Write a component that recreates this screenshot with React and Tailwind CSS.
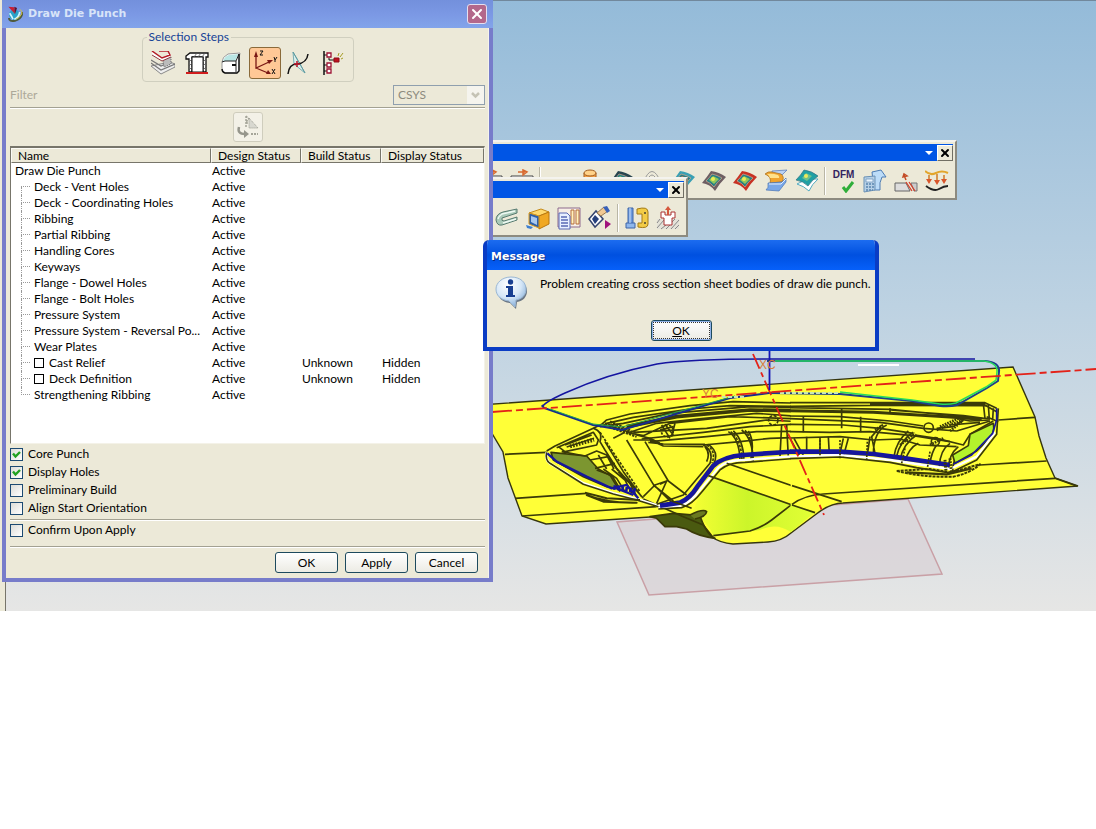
import React, { useState } from 'react';
import { X } from 'lucide-react';

// --- Data ---

const FEATURES = [
  { name: 'Deck - Vent Holes' },
  { name: 'Deck - Coordinating Holes' },
  { name: 'Ribbing' },
  { name: 'Partial Ribbing' },
  { name: 'Handling Cores' },
  { name: 'Keyways' },
  { name: 'Flange - Dowel Holes' },
  { name: 'Flange - Bolt Holes' },
  { name: 'Pressure System' },
  { name: 'Pressure System - Reversal Po...' },
  { name: 'Wear Plates' },
  { name: 'Cast Relief', optional: true, build: 'Unknown', display: 'Hidden' },
  { name: 'Deck Definition', optional: true, build: 'Unknown', display: 'Hidden' },
  { name: 'Strengthening Ribbing' },
];

// --- Icons ---

const Glyph = ({ children, className = 'h-6 w-6' }) => (
  <svg viewBox="0 0 24 24" className={`shrink-0 ${className}`} fill="none" aria-hidden="true">
    {children}
  </svg>
);

const AppLogo = () => (
  <Glyph className="h-4 w-4">
    <path d="M3 18q0 6 9 4 11-3 11-13" stroke="#4f5b3c" strokeWidth="3" />
    <circle cx="11" cy="13" r="8" fill="#2aa3c9" />
    <path d="M4 11q4 6 5 9M19 9q-1 8-8 11" stroke="#d8f5ff" strokeWidth="2.500" />
    <path d="M19 5q5 2 3 7-3 6-9 8" stroke="#cfc04a" strokeWidth="1.500" />
    <path d="M2 1l9 1 1 10z" fill="#c81f35" />
    <path d="M11 1l4 2-3 9z" fill="#5b1230" />
  </Glyph>
);

const SheetStackIcon = () => (
  <Glyph>
    <path d="M0 15l10 8 14-7v-3l-5-2z" fill="#eee" stroke="#888" />
    <path d="M0 12l10 7 14-6M0 9l10 6 9-4" stroke="#777" strokeWidth="1.200" />
    <path d="M12 9l8-4v8l-7 3z" fill="#bbb" stroke="#666" strokeDasharray="1 1" />
    <path d="M1 1l9 6 9-5 1 4-9 4L1 4z" fill="#fff" />
    <path d="M1 0l10 7 8-3-2-4H8" stroke="#b51c28" strokeWidth="1.500" />
    <path d="M1 4l10 6 9-4" stroke="#8d3a40" />
  </Glyph>
);

const ProfileIcon = () => (
  <Glyph>
    <path d="M1 5l4-3h18v4h-2v15h-3V6H7v15H4V8H1z" fill="#fff" stroke="#111" strokeWidth="1.300" />
    <path d="M7 6h11v15H7z" fill="#fff" stroke="#111" />
    <path d="M4 11l3-3M4 15l3-3M4 19l3-3M18 11l3-3M18 15l3-3M18 19l3-3M9 6l3-4M13 6l3-4M17 6l3-4" stroke="#555" strokeWidth="0.800" />
    <path d="M1 22h22" stroke="#d01c1c" strokeWidth="2" />
  </Glyph>
);

const BodyIcon = () => (
  <Glyph>
    <path d="M3 11q0-5 6-8l12-1q-1 4-1 9v9l-2 2H6q-3-2-3-5z" fill="#fff" stroke="#999" />
    <path d="M4 10q2-5 6-6l10-1-4 7z" fill="#b9e6e4" />
    <path d="M3 11l3-1h11l3-7M17 10v11" stroke="#222" />
    <path d="M3 18q0 3 3 4h12l2-2V3" stroke="#111" strokeWidth="1.400" />
    <path d="M13 14h4" stroke="#111" strokeWidth="2" />
  </Glyph>
);

const CsysIcon = () => (
  <svg viewBox="0 0 30 30" className="h-full w-full" fill="none" aria-hidden="true">
    <path d="M6 6v14l13-6M6 20l12 5" stroke="#7a1714" strokeWidth="1.300" />
    <path d="M6 3L4 9h4zM23 12l-6 0 2 4zM21 26l-3-4-2 4z" fill="#7a1714" />
    <path d="M10 3h3l-3 4h3M24 9l1 3 2-3M25 12v2M22 21l3 5M25 21l-3 5" stroke="#111" />
  </svg>
);

const DatumIcon = () => (
  <Glyph>
    <path d="M6 1l1 12 11 9z" fill="#d9efec" stroke="#7aaeb2" />
    <path d="M6 1l7 12 5 9" stroke="#5d9aa0" />
    <path d="M1 23q1-10 9-10 10-1 11-10" stroke="#111" strokeWidth="1.500" />
    <path d="M7 13h6M10 10v6" stroke="#b81428" strokeWidth="1.500" />
  </Glyph>
);

const TreeIcon = () => (
  <Glyph>
    <path d="M3 0v24" stroke="#111" strokeWidth="1.500" />
    <path d="M3 4h4M8 7v2h6M3 14h4M3 20h4" stroke="#111" />
    <path d="M6 2h4v4H6zM6 12h4v4H6zM6 18h4v4H6z" fill="#fff" stroke="#9d1233" strokeWidth="1.300" />
    <path d="M13 7h5v4h-5z" fill="#c1121f" stroke="#8d0c18" />
    <path d="M17 5l1-3M19 6l3-4M20 8l2-1" stroke="#a59b23" />
  </Glyph>
);

const ReorientIcon = () => (
  <Glyph>
    <path d="M3 12q-2 7 6 7" stroke="#96968c" strokeWidth="2.500" />
    <path d="M8 15l5 4-5 4z" fill="#96968c" />
    <path d="M10 1v12M10 1l3 3-3 3M10 8h4" stroke="#a5a599" strokeWidth="1.500" strokeDasharray="2 1" />
    <path d="M13 3l9 10H13z" fill="#d8d8d0" stroke="#9a9a90" strokeDasharray="1 1" />
    <path d="M15 19h7" stroke="#a5a599" strokeWidth="2" strokeDasharray="2 1" />
  </Glyph>
);

const InfoBubble = () => (
  <svg viewBox="0 0 32 34" className="h-[34px] w-8 shrink-0" aria-hidden="true">
    <defs>
      <radialGradient id="bubble" cx="40%" cy="25%" r="80%">
        <stop offset="0" stopColor="#fff" />
        <stop offset="0.550" stopColor="#d6e7f7" />
        <stop offset="1" stopColor="#7da8d6" />
      </radialGradient>
    </defs>
    <path d="M17 3c9 0 15 5 15 12 0 6-4 10-10 11l-1 7-6-6C6 26 3 21 3 15S8 3 17 3z" fill="#6a7684" />
    <path d="M16 1c9 0 15 5 15 12 0 6-4 10-10 11l-1 7-6-6C5 24 1 19 1 13S7 1 16 1z" fill="url(#bubble)" stroke="#9ab7d4" />
    <circle cx="15.500" cy="6" r="2.700" fill="#173e91" />
    <path d="M11 10h7v9h2v2h-9v-2h2v-7h-2z" fill="#173e91" />
  </svg>
);

const Patch = ({ edge, mid = '#8fc85a' }) => (
  <Glyph>
    <path d="M0 14Q5 8 9 2q8 1 15 6-7 7-11 14-5-7-13-8z" fill={edge} />
    <path d="M4 12q4-4 6-7 5 1 10 4-5 4-8 9-3-4-8-6z" fill="#257e86" stroke="#d9a98c" strokeWidth="0.700" />
    <path d="M7 11l4-4 6 3-5 5z" fill={mid} />
    <circle cx="11" cy="10" r="2" fill="#ecec55" />
  </Glyph>
);

const BlendIcon = () => (
  <Glyph>
    <path d="M8 2l15-1-5 5-10 0z" fill="#b9d1f3" stroke="#4d72b8" strokeWidth="0.700" />
    <path d="M1 5q3-3 7-2l9 2q4 3 1 8l-12 1q2-6-5-9z" fill="#f0a32e" stroke="#a46a18" strokeWidth="0.700" />
    <path d="M3 5q5-1 11 1 2 2 1 3l-9 0q-1-3-3-4z" fill="#ffe18b" />
    <path d="M4 14l14-1 4-4v4l-7 9-13-1q3-2 2-7z" fill="#79a7e8" stroke="#4974b5" strokeWidth="0.700" />
    <path d="M5 15h12l5-5" stroke="#e4effc" />
  </Glyph>
);

const OffsetIcon = () => (
  <Glyph>
    <path d="M2 15l10-5 11 0q-6 5-9 12-5-5-12-7z" fill="#fff" stroke="#54acc2" />
    <path d="M1 11Q6 6 9 1q8 1 14 6-6 4-10 10-5-5-12-6z" fill="#20a0a5" stroke="#35707e" strokeWidth="0.700" />
    <path d="M7 9l4-5 6 3-5 5z" fill="#6fc08a" />
    <circle cx="11" cy="7" r="2" fill="#ece95d" />
  </Glyph>
);

const DfmIcon = () => (
  <span className="flex h-6 w-6 flex-col items-center">
    <span className="font-['Liberation_Sans',sans-serif] text-[10px] leading-3 font-bold text-[#33235f]">DFM</span>
    <svg viewBox="0 0 14 12" className="ml-2 h-3 w-4" fill="none" aria-hidden="true">
      <path d="M2 6l3 4 7-9" stroke="#2fae3a" strokeWidth="3" />
    </svg>
  </span>
);

const CalculatorIcon = () => (
  <Glyph>
    <path d="M9 3l9-2 5 7h-4q-3 5-2 13h-6z" fill="#bcdcf8" stroke="#4c7cb4" />
    <path d="M1 8l11-1v14l-11 2z" fill="#b6d0e6" stroke="#6b91b5" />
    <path d="M3 10h7v3H3z" fill="#e9f5ff" stroke="#6b91b5" strokeWidth="0.700" />
    <path d="M3 15h8M3 18h8M3 21h7" stroke="#5a85b0" strokeWidth="1.500" strokeDasharray="2 1" />
  </Glyph>
);

const TrimIcon = () => (
  <Glyph>
    <path d="M1 14h11l4 8H1z" fill="#ddd" stroke="#666" />
    <path d="M17 14h6v8h-3z" fill="#ccc" stroke="#777" />
    <path d="M12 13l6 9M15 13l6 9" stroke="#d4402c" strokeWidth="1.300" />
    <path d="M12 11L10 6M9 8l1-3 3 2z" stroke="#c34b25" strokeWidth="1.500" />
  </Glyph>
);

const ProjectIcon = () => (
  <Glyph>
    <path d="M0 2q5 5 11 2t12 0" stroke="#e2a52b" strokeWidth="2" />
    <path d="M4 6v6M12 5v8M19 6v6" stroke="#d07b24" strokeWidth="1.500" />
    <path d="M1 10h6l-3 5zM9 11h6l-3 5zM16 10h6l-3 5z" fill="#d9562b" />
    <path d="M1 17q8 6 13 3t9-3" stroke="#222" strokeWidth="2" />
  </Glyph>
);

const ClampIcon = () => (
  <Glyph>
    <path d="M22 3L8 6q-7 2-7 8 1 6 6 5l15-5v-3l-13 4q-3 0-2-3l15-5z" fill="#a9c9b8" stroke="#577a70" />
    <path d="M20 5L7 8q-3 2-4 5M8 17l13-4" stroke="#eef9f3" strokeWidth="1.500" />
  </Glyph>
);

const BoxIcon = () => (
  <Glyph>
    <path d="M3 7l12-4 8 3-10 4z" fill="#ffd96d" stroke="#c58a1a" />
    <path d="M13 10l10-4v12l-10 5z" fill="#f0a823" stroke="#b9770f" />
    <path d="M3 7l10 3v12L3 18z" fill="#2e5fa8" stroke="#d89a20" />
    <path d="M5 10l6 2v7l-6-3z" fill="#a9c8ee" />
    <path d="M0 19l7 2-2 2-4-1z" fill="#3c7ed0" />
  </Glyph>
);

const SpecSheetIcon = () => (
  <Glyph>
    <path d="M1 2h22v19H1z" fill="#f7efe6" stroke="#8d6a8d" />
    <path d="M14 4h3v14h-3zM19 4h3v14h-3z" fill="#fff2bf" stroke="#b56c3a" />
    <path d="M2 7h8l3 3v13H2z" fill="#e8f0ff" stroke="#5868b4" />
    <path d="M4 11h6M4 14h7M4 17h7M4 20h7" stroke="#5868b4" strokeWidth="1.500" />
  </Glyph>
);

const PaintIcon = () => (
  <Glyph>
    <path d="M1 13l7-8 7 8-8 8z" fill="#fff" stroke="#34446e" strokeWidth="1.500" />
    <path d="M4 13l3-4 4 4-4 5z" fill="#26407c" />
    <path d="M9 7l7-6 4 4-7 5z" fill="#f0c994" stroke="#9b7a50" />
    <path d="M15 1l4-1 3 5-3 2z" fill="#3a62b9" />
    <path d="M17 14l6 4-6 5z" fill="#a0127c" />
  </Glyph>
);

const PinClampIcon = () => (
  <Glyph>
    <path d="M3 2h5v16H3z" fill="#6d9ade" stroke="#3d65a8" />
    <path d="M1 17h9v5H1z" fill="#8fb7ec" stroke="#3d65a8" />
    <path d="M5 2v15" stroke="#cde0fa" />
    <path d="M12 3q11-3 11 3v12q0 5-10 3v-4h4V8h-5z" fill="#f2cb46" stroke="#a47b15" />
    <circle cx="20" cy="7" r="1" fill="#443" />
    <circle cx="20" cy="17" r="1" fill="#443" />
  </Glyph>
);

const InsertIcon = () => (
  <Glyph>
    <path d="M1 13h7v6h8v-6h7v10H1z" fill="#e4e2d8" />
    <path d="M1 17l3-4M1 22l7-8M5 23l5-4M10 23l4-4M15 23l8-9M19 23l4-4M16 16l3-3" stroke="#888" />
    <path d="M5 6h4v3h6V6h4v6h-3v7H8v-7H5z" fill="#fff" stroke="#a33" />
    <path d="M12 0l3 4h-2v5h-2V4H9z" fill="#d5573c" />
  </Glyph>
);

const CylinderIcon = () => (
  <Glyph>
    <path d="M6 4v14q6 3 12 0V4" fill="#f5a046" stroke="#a15c1e" />
    <ellipse cx="12" cy="4" rx="6" ry="3" fill="#ffd28a" stroke="#a15c1e" />
  </Glyph>
);

const ArchIcon = () => (
  <Glyph>
    <path d="M3 14Q12-9 21 14M6 14q6-16 12 0M9 14q3-10 6 0" stroke="#999" />
  </Glyph>
);

const MeasureIcon = () => (
  <Glyph>
    <path d="M1 7h22v10H1z" fill="#fff" stroke="#444" />
    <path d="M6 9h12" stroke="#444" strokeWidth="2" />
    <path d="M8 3h7M13 1l4 2-4 3z" stroke="#d8692f" strokeWidth="1.500" />
  </Glyph>
);

// --- 3D view ---

const Model = () => (
  <svg viewBox="0 0 1096 611" className="absolute top-0 left-0 h-[611px] w-[1096px]" fill="none" aria-hidden="true">
    <defs>
      <clipPath id="left-half">
        <path d="M0 0H902V780H0z" />
      </clipPath>
      <linearGradient id="wall" x1="0" x2="1">
        <stop offset="0" stopColor="#f6ff34" />
        <stop offset="0.450" stopColor="#ccf52a" />
        <stop offset="1" stopColor="#e2ff36" />
      </linearGradient>
    </defs>
    <path d="M617 522L649 595 942 574 908 499z" fill="#d9d3d7" fillOpacity="0.800" stroke="#c9a0a6" strokeWidth="1.500" />
    <path
      d="M480 405L1013 367 1035 417 1039 436 1046 458 1055 478 1078 486 843 503Q830 503 815 515L791 533Q782 541 768 542L733 544Q720 543 712 537L690 515 650 517 546 524 522 516 508 478 503 452 490 430z"
      fill="#ffff37"
      stroke="#35350f"
      strokeWidth="1.400"
    />
    <path d="M692 513L708 476 792 504 815 512 791 532Q776 522 760 530L714 536Q705 518 692 513z" fill="url(#wall)" />

    {/* left half of the punch, in third-pixel units */}
    <g clipPath="url(#left-half)" transform="translate(490 345) scale(.3333)" stroke="#3a3a08" strokeWidth="5" strokeLinejoin="round">
      <path d="M480 515L550 505 630 512Q650 570 675 580 620 572 590 552L560 545 525 545 500 520z" fill="#4a5a10" />
      <path d="M600 510Q640 490 650 500 648 515 615 522" fill="#6b7a20" />
      <path d="M45 328L170 322M75 460L290 445M97 513L500 485M460 462L580 515 640 540 670 578" />
      <path d="M183 322L290 333 325 372 368 395 390 432 350 425 280 395 190 345z" fill="#7c9630" />
      <path d="M170 322Q165 345 180 355L280 415 370 445 440 462 510 484" stroke="#fff" strokeWidth="8" />
      <path d="M170 318L195 303 310 250 335 238M170 322Q165 345 180 355L280 418 370 447 440 465 520 490" />
      <path d="M200 308L310 262 325 285 320 300 225 320 205 305M225 300L305 270M230 306L312 280M215 320L285 333 320 318 350 330 385 378" />
      <path d="M240 304L312 284" strokeWidth="12" strokeDasharray="5 4" />
      <path d="M300 345L355 335M315 370L375 355M325 330L350 372M350 330L372 372M320 375L360 390 390 440M340 372L380 400 405 440M365 372L405 405 425 445M385 380L420 415 440 455" />
      <path d="M310 250Q340 260 330 290L345 315 380 370 460 460M345 290L400 380 455 455M410 285L490 418 545 472M465 290L535 408 590 450M370 280L405 262M460 455L495 420 530 408 500 475M490 420L550 468M510 418L530 408" />
      <path d="M330 262L355 300 395 360 450 440" strokeDasharray="8 4" />
      <path d="M285 443L350 460 450 465M290 450Q350 475 440 473L340 470z" strokeWidth="6" />
      <path d="M335 238L350 225 420 207 600 182 730 170 906 174M350 235L430 217 600 192 720 182 906 184M330 245L400 235 540 205 780 185 906 187" />
      <path d="M410 245L560 215 780 195 906 197" strokeWidth="11" />
      <path d="M340 238L420 262 500 235 620 222 800 205 906 213M410 262L460 272 540 235 720 215 906 221M430 262L650 250 830 225 906 229M455 282L640 262 780 245 906 238M480 290L650 275 800 260 906 259" />
      <path d="M430 285L480 285 520 303 640 305M475 292L520 297 645 298M640 300L750 290 840 280 906 278M440 270L480 280 510 295" />
      <path d="M515 240L540 280M525 238L550 270M555 235L545 275M510 255L550 245" />
      <circle cx="850" cy="226" r="14" strokeDasharray="9 4" />
      <circle cx="532" cy="258" r="18" strokeDasharray="7 4" />
      <path d="M345 235L430 262M360 230L420 255M370 250L440 275" strokeWidth="7" strokeDasharray="7 3" />
      <path d="M640 300Q672 315 660 355L580 450 500 478M655 298Q688 320 672 355M645 305Q662 325 650 350M715 260Q748 280 750 345M730 258Q760 285 762 345M755 255Q788 280 790 350M775 258Q795 290 782 345M875 240L870 335M890 240L895 335" />
      <path d="M722 260Q754 285 756 345M765 256Q792 285 786 348M650 300Q680 318 666 355" strokeDasharray="8 4" />
      <path d="M505 488L570 483Q600 475 630 435L685 368Q710 345 760 345L906 334" stroke="#fff" strokeWidth="7" />
      <path d="M505 492L575 488Q605 480 638 438L690 375Q715 352 765 352L906 341" />
      <path d="M510 482L570 473Q600 460 622 425L670 362Q700 335 760 330L906 320" stroke="#16169c" strokeWidth="14" />
      <path d="M172 325L200 350 290 395 365 430 410 420 445 460M380 430L430 450" stroke="#16169c" strokeWidth="7" />
      <path d="M370 427L440 437" stroke="#16169c" strokeWidth="14" strokeDasharray="8 4" />
      <path d="M710 355L906 422M655 392L906 480M670 572L780 558Q815 548 845 525L906 478M545 468L605 490" />
    </g>

    {/* right half of the punch */}
    <g transform="translate(790 345) scale(.3333)" stroke="#3a3a08" strokeWidth="5" strokeLinejoin="round">
      <path d="M0 173L240 173 585 173 620 190M0 184L250 181 590 182M0 188L300 193 575 220M240 178L585 178M300 195L520 212 600 222" />
      <path d="M0 197L250 202 480 216 575 223" strokeWidth="9" />
      <path d="M0 213L150 215 300 228 400 243M0 221L270 232 400 250 500 258M0 238L160 240 270 250 370 265M0 260L120 262 240 260 370 272 480 290M500 220L540 228 600 225M480 240L570 232M500 258L560 240 600 228" />
      <path d="M0 279L150 275 250 285 330 282 390 300 500 305M375 270L440 280 520 300 540 268 610 228M440 250L490 245 520 225" />
      <path d="M40 215L40 262M155 190L155 250M212 215L212 262M300 190L300 205M50 275L50 325M90 277L90 325M115 275L118 328M0 280L30 335M12 280L42 335M160 280L148 335M175 280L160 335M240 275L232 330M440 300Q425 320 420 355M480 295Q450 315 448 365M505 305Q475 330 475 375M515 318Q488 340 488 378M385 295Q355 310 345 350" />
      <path d="M290 240Q250 260 250 330M275 240L245 275 255 325M370 262Q330 285 318 340M355 258Q318 290 312 335M380 270Q340 295 330 345" />
      <path d="M255 255L280 240M330 300L375 265M420 300L460 280M440 255L520 225M450 245L510 218M480 258L515 230" strokeWidth="8" strokeDasharray="5 3" />
      <circle cx="416" cy="248" r="14" />
      <circle cx="436" cy="290" r="12" />
      <path d="M540 268L610 235Q616 262 595 285L560 318 495 355 488 330 535 302z" fill="#b4f22c" />
      <path d="M580 175L585 220M595 180L598 222M610 190L608 225M575 175L620 200M590 215L625 230" />
      <path d="M0 334L150 330 300 345 480 372 560 335 615 262" stroke="#fff" strokeWidth="7" />
      <path d="M0 341L150 336 300 352 380 368 480 384 560 345 620 268 625 190" />
      <path d="M0 320L150 320 250 327 330 338 480 360" stroke="#16169c" strokeWidth="14" />
      <path d="M90 285V335M150 285V340M232 290L230 345M345 310L335 355M420 320L412 370" strokeDasharray="6 4" />
      <path d="M490 358L545 330 608 265 620 225 620 190" stroke="#16169c" />
      <path d="M465 345L468 378M480 340L485 385" strokeWidth="9" strokeDasharray="5 4" />
      <path d="M320 378L420 372 480 382 570 358Q540 385 490 395 400 398 320 378z" strokeDasharray="9 3" strokeWidth="6" />
      <path d="M350 382L470 388 545 370" strokeWidth="7" />
      <path d="M625 225L735 217M570 360L770 348M6 478Q45 450 100 447L795 400 862 424M6 422L155 470M6 480L75 503" />
    </g>

    {/* guide curves */}
    <path d="M542 407Q545 402 565 393 607 374 657 364 690 359 767 359H975" stroke="#1414a0" strokeWidth="1.600" />
    <path d="M769 393L730 398 622 430 593 425 544 408 542 405" stroke="#172b8e" strokeWidth="2" />
    <path d="M735 396L622 427 593 424 550 409" stroke="#22a055" />
    <path d="M767 361H985Q1000 362 999 372L998 381 987 388 957 405Q950 407 940 406L912 401 840 394 769 393" stroke="#1c3f8c" strokeWidth="2" />
    <path d="M775 361H984Q998 363 997 372L996 380 986 387 956 403Q948 405 940 404L912 400 840 392" stroke="#27dc5c" strokeWidth="1.500" />
    <path d="M858 365H899" stroke="#fff" strokeWidth="2" />
    <path d="M780 393H840M722 397H745" stroke="#c8e6b4" strokeWidth="2" strokeDasharray="4 2" />
    <path d="M492 412L1096 369" stroke="#e32219" strokeWidth="1.800" strokeDasharray="20 4 7 4" />
    <path d="M753 354L824 515" stroke="#e32219" strokeWidth="1.800" strokeDasharray="16 4 5 4" />
    <path d="M769.500 345V390" stroke="#1414b4" strokeWidth="1.800" />
    <g fill="#d87d3c" fontFamily="Liberation Sans, sans-serif" fontSize="12">
      <text x="759" y="369">XC</text>
      <text x="702" y="398">YC</text>
    </g>
  </svg>
);

// --- Toolbars ---

const ToolbarButton = ({ label, children }) => (
  <button type="button" aria-label={label} className="flex h-7 w-[31px] shrink-0 items-center justify-center">
    {children}
  </button>
);

const Divider = () => <span className="mx-[2px] h-7 w-[2px] shrink-0 border-l border-[#b9b6a5] bg-white" />;

const Toolbar = ({ className, children }) => (
  <div className={`absolute h-[60px] overflow-hidden border-2 border-t-[#f4f3ee] border-r-[#8d8b80] border-b-[#8d8b80] border-l-[#f4f3ee] bg-[#ece9d8] p-[2px] ${className}`}>
    <div className="flex h-[17px] items-center justify-end gap-1 bg-[#0055e5]">
      <span className="h-0 w-0 border-x-4 border-t-4 border-x-transparent border-t-white" />
      <button type="button" aria-label="Close toolbar" className="flex h-4 w-4 items-center justify-center border border-white border-r-[#716f64] border-b-[#716f64] bg-[#ece9d8]">
        <X size={12} strokeWidth={4} className="text-black" />
      </button>
    </div>
    <div className="flex h-10 items-center justify-end pr-px">{children}</div>
  </div>
);

// --- Dialog parts ---

const PushButton = ({ children, focused }) => (
  <button
    type="button"
    className={`flex h-[21px] items-center justify-center rounded-[3px] border border-[#1d4a5e] bg-linear-to-b from-white to-[#ecebe4] ${focused ? 'w-[61px] p-px shadow-[inset_0_0_0_1px_#8fb1e8]' : 'w-[63px]'}`}
  >
    {focused ? <span className="flex h-full w-full items-center justify-center border border-dotted border-[#333]">{children}</span> : children}
  </button>
);

const Option = ({ label, defaultChecked = false }) => {
  const [checked, setChecked] = useState(defaultChecked);
  return (
    <label className="flex h-[18px] items-center gap-[5px]">
      <span className="grid h-[13px] w-[13px]">
        <input
          type="checkbox"
          checked={checked}
          onChange={(e) => setChecked(e.target.checked)}
          className="col-start-1 row-start-1 h-[13px] w-[13px] appearance-none border border-[#1c4a72] bg-linear-to-br from-[#dcdcd7] to-white"
        />
        {checked && (
          <svg viewBox="0 0 13 13" className="pointer-events-none col-start-1 row-start-1" fill="none" aria-hidden="true">
            <path d="M3 5.500L5.500 8.500 10 4" stroke="#21a121" strokeWidth="2.400" />
          </svg>
        )}
      </span>
      {label}
    </label>
  );
};

const StepButton = ({ label, active, onClick, children }) => (
  <button
    type="button"
    aria-label={label}
    aria-pressed={active}
    onClick={onClick}
    className={`flex h-8 w-8 items-center justify-center rounded-[3px] border ${active ? 'border-[#8a6a3a] bg-[#ffc896]' : 'border-transparent'}`}
  >
    {children}
  </button>
);

const STEPS = [
  { label: 'Sheets', Icon: SheetStackIcon },
  { label: 'Profile', Icon: ProfileIcon },
  { label: 'Body', Icon: BodyIcon },
  { label: 'CSYS', Icon: CsysIcon },
  { label: 'Datum', Icon: DatumIcon },
  { label: 'Tree', Icon: TreeIcon },
];

const SelectionSteps = () => {
  const [step, setStep] = useState('CSYS');
  return (
    <fieldset className="mx-auto h-[53px] w-[212px] rounded-[4px] border border-[#d0cfbf] px-1">
      <legend className="h-4 px-[2px] leading-4 text-[#174396]">Selection Steps</legend>
      <div className="flex gap-[2px] pt-[2px]">
        {STEPS.map(({ label, Icon }) => (
          <StepButton key={label} label={label} active={step === label} onClick={() => setStep(label)}>
            <Icon />
          </StepButton>
        ))}
      </div>
    </fieldset>
  );
};

const Branch = ({ first, last }) => (
  <span className="ml-[10px] flex h-4 w-[9px] shrink-0 flex-col">
    <span className={`h-2 border-b border-dotted border-[#999] ${first ? '' : 'border-l'}`} />
    <span className={`h-2 border-dotted border-[#999] ${last ? '' : 'border-l'}`} />
  </span>
);

const HEAD = 'h-[15px] border border-[#fbfaf4] border-r-[#77756a] border-b-[#77756a] bg-[#ece9d8] px-[6px] text-left leading-[13px] font-normal';

const FeatureTable = () => (
  <div className="h-[298px] border border-t-2 border-[#77756a] border-r-[#f4f2e8] border-b-[#f4f2e8] bg-white">
    <table className="w-full table-fixed border-separate border-spacing-0 whitespace-nowrap">
      <colgroup>
        <col className="w-[200px]" />
        <col className="w-[90px]" />
        <col className="w-[80px]" />
        <col />
      </colgroup>
      <thead>
        <tr>
          <th className={HEAD}>Name</th>
          <th className={HEAD}>Design Status</th>
          <th className={HEAD}>Build Status</th>
          <th className={HEAD}>Display Status</th>
        </tr>
      </thead>
      <tbody className="leading-4">
        <tr>
          <td className="h-4 pl-1">Draw Die Punch</td>
          <td className="pl-px">Active</td>
          <td />
          <td />
        </tr>
        {FEATURES.map((feature, i) => (
          <tr key={feature.name}>
            <td className="h-4">
              <div className="flex h-4 items-center">
                <Branch first={i === 0} last={i === FEATURES.length - 1} />
                {feature.optional ? (
                  <label className="ml-1 flex items-center gap-[5px]">
                    <input type="checkbox" className="h-[10px] w-[10px] appearance-none border border-black checked:bg-black" />
                    {feature.name}
                  </label>
                ) : (
                  <span className="ml-1">{feature.name}</span>
                )}
              </div>
            </td>
            <td className="pl-px">Active</td>
            <td className="pl-px">{feature.build}</td>
            <td className="pl-px">{feature.display}</td>
          </tr>
        ))}
      </tbody>
    </table>
  </div>
);

const Rule = ({ className = '' }) => <hr className={`h-[2px] border-0 border-t border-[#a3a192] bg-white ${className}`} />;

const DrawDieDialog = () => (
  <section className="absolute top-0 left-[2px] w-[491px] border-x-4 border-b-4 border-[#777cca] bg-[#ece9d8] shadow-[inset_-1px_0_0_#f5f3ec]">
    <header className="-mx-1 flex h-7 items-center justify-between bg-linear-to-b from-[#7390dc] via-[#7b98e4] to-[#82a4ea] pr-[6px] pl-[5px]">
      <div className="flex items-center gap-[5px]">
        <AppLogo />
        <h1 className="font-['DejaVu_Sans',sans-serif] text-[11px] font-bold text-[#d8e4f8]">Draw Die Punch</h1>
      </div>
      <button type="button" aria-label="Close" className="flex h-5 w-5 items-center justify-center rounded-[3px] border border-[#e4e0f0] bg-[#b3688b]">
        <X size={16} strokeWidth={3} className="text-white" />
      </button>
    </header>

    <div className="px-1 pt-px">
      <SelectionSteps />
      <div className="flex h-[25px] items-start justify-between pt-[3px]">
        <label htmlFor="filter" className="leading-5 text-[#aca899]">Filter</label>
        <div className="flex h-5 w-[92px] border border-[#8f9fae]">
          <select id="filter" disabled className="min-w-0 flex-1 appearance-none bg-[#ece9d8] pl-1 text-[#8d8b7e]">
            <option>CSYS</option>
          </select>
          <svg viewBox="0 0 17 18" className="h-[18px] w-[17px] bg-[#f5f4ee]" fill="none" aria-hidden="true">
            <path d="M5 7l3.500 3.500L12 7" stroke="#c5c3b5" strokeWidth="2.500" />
          </svg>
        </div>
      </div>
      <Rule />
      <div className="flex h-[37px] justify-center pt-[3px]">
        <button type="button" disabled aria-label="Reorient" className="flex h-[30px] w-[30px] items-center justify-center rounded-[3px] border border-[#cfcdbd] bg-[#f3f1e7]">
          <ReorientIcon />
        </button>
      </div>
      <FeatureTable />
      <div className="pt-px">
        <Option label="Core Punch" defaultChecked />
        <Option label="Display Holes" defaultChecked />
        <Option label="Preliminary Build" />
        <Option label="Align Start Orientation" />
      </div>
      <Rule className="mt-[2px]" />
      <Option label="Confirm Upon Apply" />
      <Rule className="mt-[7px]" />
      <div className="flex justify-end gap-[7px] pt-1 pr-[7px] pb-[5px]">
        <PushButton>OK</PushButton>
        <PushButton>Apply</PushButton>
        <PushButton>Cancel</PushButton>
      </div>
    </div>
  </section>
);

const MessageBox = () => (
  <section role="alertdialog" aria-labelledby="message-title" className="absolute top-60 left-[483px] w-[396px] overflow-hidden rounded-t-md border-x-4 border-b-4 border-[#0a3cc4] bg-[#ece9d8]">
    <header className="-mx-1 flex h-[30px] items-center bg-linear-to-b from-[#1c6cf0] via-[#0050e0] to-[#0660fa] px-2 pt-1">
      <h2 id="message-title" className="font-['DejaVu_Sans',sans-serif] text-[11px] font-bold text-white [text-shadow:1px_1px_#0a2a80]">Message</h2>
    </header>
    <div className="flex items-start gap-[13px] pt-[6px] pl-2">
      <InfoBubble />
      <p className="leading-4 whitespace-nowrap">Problem creating cross section sheet bodies of draw die punch.</p>
    </div>
    <div className="flex justify-center pt-[10px] pb-[6px]">
      <PushButton focused>
        <u>O</u>K
      </PushButton>
    </div>
  </section>
);

const App = () => (
  <div className="min-h-screen bg-white font-['Lato','Noto_Sans_CJK_JP',sans-serif] text-[12px] text-black">
    <main className="relative h-[611px] overflow-hidden bg-linear-to-b from-[#94bbd9] via-[#bdd2e2] to-[#e6e6e5] shadow-[inset_0_1px_0_#71889c]">
      <div className="h-full w-[6px] border-r border-[#77756a] bg-[#ece9d8]" />
      <Model />

      <Toolbar className="top-[140px] left-[480px] w-[477px]">
        <ToolbarButton label="Move"><MeasureIcon /></ToolbarButton>
        <ToolbarButton label="Measure"><MeasureIcon /></ToolbarButton>
        <Divider />
        <ToolbarButton label="Spare" />
        <ToolbarButton label="Cylinder"><CylinderIcon /></ToolbarButton>
        <ToolbarButton label="Surface"><Patch edge="#28454f" /></ToolbarButton>
        <ToolbarButton label="Arch"><ArchIcon /></ToolbarButton>
        <ToolbarButton label="Extend"><Patch edge="#3aa0b4" mid="#d27a55" /></ToolbarButton>
        <ToolbarButton label="Grey patch"><Patch edge="#6e5f63" /></ToolbarButton>
        <ToolbarButton label="Red patch"><Patch edge="#c73224" /></ToolbarButton>
        <ToolbarButton label="Blend"><BlendIcon /></ToolbarButton>
        <ToolbarButton label="Offset"><OffsetIcon /></ToolbarButton>
        <Divider />
        <ToolbarButton label="DFM check"><DfmIcon /></ToolbarButton>
        <ToolbarButton label="Calculate"><CalculatorIcon /></ToolbarButton>
        <ToolbarButton label="Trim"><TrimIcon /></ToolbarButton>
        <ToolbarButton label="Project"><ProjectIcon /></ToolbarButton>
      </Toolbar>

      <Toolbar className="top-[177px] left-[480px] w-52">
        <ToolbarButton label="Clamp"><ClampIcon /></ToolbarButton>
        <ToolbarButton label="Box"><BoxIcon /></ToolbarButton>
        <ToolbarButton label="Specification"><SpecSheetIcon /></ToolbarButton>
        <ToolbarButton label="Paint"><PaintIcon /></ToolbarButton>
        <Divider />
        <ToolbarButton label="Pin clamp"><PinClampIcon /></ToolbarButton>
        <ToolbarButton label="Insert"><InsertIcon /></ToolbarButton>
      </Toolbar>

      <DrawDieDialog />
      <MessageBox />
    </main>
  </div>
);

export default App;
